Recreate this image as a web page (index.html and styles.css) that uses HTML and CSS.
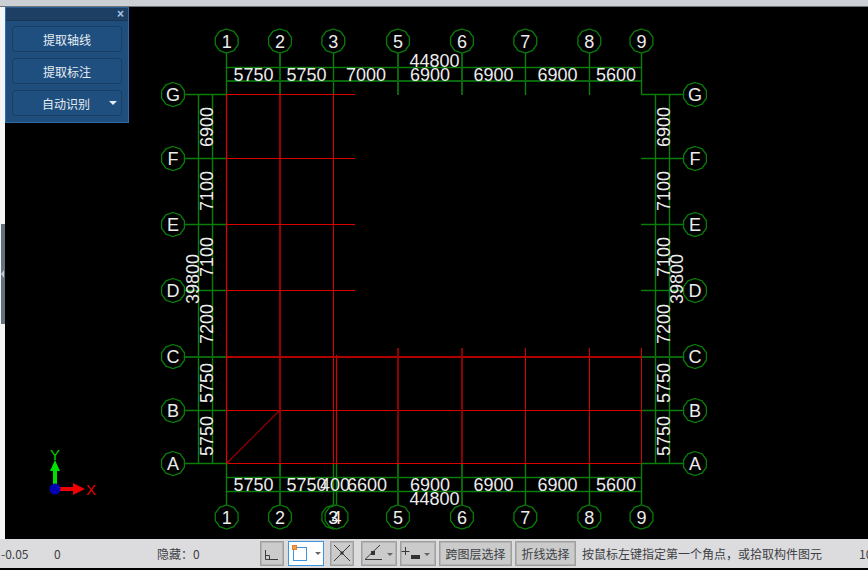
FILE: index.html
```html
<!DOCTYPE html>
<html lang="zh-CN">
<head>
<meta charset="utf-8">
<title>提取轴线</title>
<link rel="stylesheet" href="styles.css">
</head>
<body>
<div class="app">
  <div class="topbar"></div>
  <main class="main">
    <div class="strip"><div class="handle"><span class="handle-arrow"></span></div></div>
    <div class="canvas">
      <svg class="cad" width="863" height="532" viewBox="5 7 863 532">
        <defs>
          <polygon id="bub" points="0,-12 7.05,-9.71 11.41,-3.71 11.41,3.71 7.05,9.71 0,12 -7.05,9.71 -11.41,3.71 -11.41,-3.71 -7.05,-9.71"/>
        </defs>
        <g class="gr">
          <path d="M226.5 53V94M333.5 53V94M525.5 53V95M589.5 53V95M641.5 53V94"/>
          <path d="M226.5 463V505M333.5 463V505M336.5 463V505M525.5 463V505M589.5 463V505M641.5 463V505"/>
          <path d="M185 94.5H227M185 158.5H227M185 224.5H227M185 290.5H227M185 410.5H227M185 463.5H227"/>
          <path d="M641 94.5H683M641 158.5H683M641 224.5H683M641 290.5H683M641 410.5H683M641 463.5H683"/>
          <path d="M227 67.5H641M227 477.5H641M227 491.5H641"/>
          <path d="M198.5 94V463M212.5 94V463M655.5 94V463M669.5 94V463"/>
        </g>
        <g class="gr-thick">
          <path d="M280 53V94M398 53V95M462 53V95"/>
          <path d="M280 463V505M398 463V505M462 463V505"/>
          <path d="M185 357H227M641 357H683"/>
          <path d="M227 81H641"/>
        </g>
        <g class="rd">
          <path d="M227 94.5H355M227 158.5H355M227 224.5H355M227 290.5H355"/>
          <path d="M227 410.5H641M227 463.5H641"/>
          <path d="M226.500 94V463M336.5 355V463"/>
        </g>
        <path class="rd-mid" d="M280 94V410"/>
        <path class="rd-thin" d="M333.5 94V463M525.5 348V463M589.5 348V463M641.5 348V463"/>
        <path class="rd-h" d="M227 357H641"/>
        <path class="rd-thick" d="M398 348V463M462 348V463M280 410V463"/>
        <path class="rd-diag" d="M227 463L280 410"/>
        <g class="bubbles">
          <use href="#bub" x="226.7" y="41"/><use href="#bub" x="280" y="41"/><use href="#bub" x="333.3" y="41"/>
          <use href="#bub" x="398" y="41"/><use href="#bub" x="462" y="41"/><use href="#bub" x="525.3" y="41"/>
          <use href="#bub" x="589.3" y="41"/><use href="#bub" x="641.5" y="41"/>
          <use href="#bub" x="226.7" y="517"/><use href="#bub" x="280" y="517"/><use href="#bub" x="333.3" y="517"/>
          <use href="#bub" x="336.5" y="517"/><use href="#bub" x="398" y="517"/><use href="#bub" x="462" y="517"/>
          <use href="#bub" x="525.3" y="517"/><use href="#bub" x="589.3" y="517"/><use href="#bub" x="641.5" y="517"/>
          <use href="#bub" x="173" y="94.5"/><use href="#bub" x="173" y="158.5"/><use href="#bub" x="173" y="224.5"/>
          <use href="#bub" x="173" y="290.5"/><use href="#bub" x="173" y="356.5"/><use href="#bub" x="173" y="410.5"/><use href="#bub" x="173" y="463.5"/>
          <use href="#bub" x="695" y="94.5"/><use href="#bub" x="695" y="158.5"/><use href="#bub" x="695" y="224.5"/>
          <use href="#bub" x="695" y="290.5"/><use href="#bub" x="695" y="356.5"/><use href="#bub" x="695" y="410.5"/><use href="#bub" x="695" y="463.5"/>
        </g>
        <g class="lbl">
          <text x="226.7" y="47.5">1</text><text x="280" y="47.5">2</text><text x="333.3" y="47.5">3</text>
          <text x="398" y="47.5">5</text><text x="462" y="47.5">6</text><text x="525.3" y="47.5">7</text>
          <text x="589.3" y="47.5">8</text><text x="641.5" y="47.5">9</text>
          <text x="226.7" y="523.5">1</text><text x="280" y="523.5">2</text><text x="333.3" y="523.5">3</text>
          <text x="336.5" y="523.5">4</text><text x="398" y="523.5">5</text><text x="462" y="523.5">6</text>
          <text x="525.3" y="523.5">7</text><text x="589.3" y="523.5">8</text><text x="641.5" y="523.5">9</text>
          <text x="173" y="101">G</text><text x="173" y="165">F</text><text x="173" y="231">E</text>
          <text x="173" y="297">D</text><text x="173" y="363">C</text><text x="173" y="417">B</text><text x="173" y="470">A</text>
          <text x="695" y="101">G</text><text x="695" y="165">F</text><text x="695" y="231">E</text>
          <text x="695" y="297">D</text><text x="695" y="363">C</text><text x="695" y="417">B</text><text x="695" y="470">A</text>
          <text x="253.5" y="81">5750</text><text x="306.5" y="81">5750</text><text x="366" y="81">7000</text>
          <text x="430" y="81">6900</text><text x="493.5" y="81">6900</text><text x="557.5" y="81">6900</text><text x="616" y="81">5600</text>
          <text x="434.5" y="67">44800</text>
          <text x="253.5" y="491">5750</text><text x="306.5" y="491">5750</text><text x="335" y="491">400</text><text x="367" y="491">6600</text>
          <text x="430" y="491">6900</text><text x="493.5" y="491">6900</text><text x="557.5" y="491">6900</text><text x="616" y="491">5600</text>
          <text x="434.5" y="505">44800</text>
          <text transform="translate(212.5 127) rotate(-90)">6900</text><text transform="translate(212.5 191) rotate(-90)">7100</text>
          <text transform="translate(212.5 257) rotate(-90)">7100</text><text transform="translate(212.5 324) rotate(-90)">7200</text>
          <text transform="translate(212.5 383) rotate(-90)">5750</text><text transform="translate(212.5 436) rotate(-90)">5750</text>
          <text transform="translate(199 279) rotate(-90)">39800</text>
          <text transform="translate(669.5 127) rotate(-90)">6900</text><text transform="translate(669.5 191) rotate(-90)">7100</text>
          <text transform="translate(669.5 257) rotate(-90)">7100</text><text transform="translate(669.5 324) rotate(-90)">7200</text>
          <text transform="translate(669.5 383) rotate(-90)">5750</text><text transform="translate(669.5 436) rotate(-90)">5750</text>
          <text transform="translate(683 279) rotate(-90)">39800</text>
        </g>
        <path class="ucs-y" d="M53 489V471H50L55 460L60 471H57V489Z"/>
        <path class="ucs-x" d="M55 487H73V483L85 489L73 495V491H55Z"/>
        <circle class="ucs-o" cx="55" cy="489" r="5.5"/>
        <text class="ucs-ty" x="55" y="460">Y</text>
        <text class="ucs-tx" x="91" y="495">X</text>
      </svg>
      <aside class="panel">
        <header class="panel-head"><span class="panel-close">×</span></header>
        <div class="panel-body">
          <button class="pbtn">提取轴线</button>
          <button class="pbtn">提取标注</button>
          <button class="pbtn pbtn-drop">自动识别<span class="pbtn-arrow"></span></button>
        </div>
      </aside>
    </div>
  </main>
  <footer class="status">
    <span class="s-x">-0.05</span>
    <span class="s-y">0</span>
    <span class="s-hide">隐藏：0</span>
    <button class="tool t-s">
      <svg width="24" height="25" viewBox="260 542 24 25"><path class="ic" d="M265.5 551V560.5H278M265.5 556.5H269.5V560.5"/></svg>
    </button>
    <button class="tool t-m t-on">
      <svg width="36" height="25" viewBox="288 542 36 25">
        <rect x="293.5" y="548.5" width="13" height="13" class="ic-blue"/>
        <rect x="292.5" y="546.5" width="4" height="4" class="ic-orange"/>
        <path class="ic-arrow" d="M315 553H321L318 556Z"/>
      </svg>
    </button>
    <button class="tool t-s t-gap">
      <svg width="24" height="25" viewBox="330 542 24 25"><path class="ic" d="M334 546L350 562M350 546L334 562"/><rect x="340.5" y="552.5" width="3" height="3" class="ic-fill"/></svg>
    </button>
    <button class="tool t-m t-gap2">
      <svg width="36" height="25" viewBox="361 542 36 25">
        <path class="ic" d="M365 560.5H382M365 560.5L380 546"/><rect x="371" y="552" width="4" height="4" class="ic-fill"/>
        <path class="ic-arrow" d="M387 554H393L390 557Z"/>
      </svg>
    </button>
    <button class="tool t-m t-near">
      <svg width="36" height="25" viewBox="400 542 36 25">
        <path class="ic" d="M405.5 548V556M401.5 552.5H409.5"/><rect x="411" y="556" width="9" height="4" class="ic-fill"/>
        <path class="ic-arrow" d="M424 554H430L427 557Z"/>
      </svg>
    </button>
    <button class="tool t-text t-near t-w1">跨图层选择</button>
    <button class="tool t-text t-near t-w2">折线选择</button>
    <span class="s-tip">按鼠标左键指定第一个角点，或拾取构件图元</span>
    <span class="s-end">10</span>
  </footer>
</div>
</body>
</html>
```
FILE: styles.css
```css
* { box-sizing: border-box; }
html, body { margin: 0; padding: 0; background: #000; }
body { width: 868px; height: 570px; overflow: hidden; font-family: "Noto Sans CJK SC", "Liberation Sans", sans-serif; }
.app { display: flex; flex-direction: column; width: 868px; height: 570px; }
.topbar { height: 7px; flex: none; background: #ccd0d4; border-bottom: 1px solid #6f7478; }
.main { display: flex; height: 532px; flex: none; }
.strip { width: 5px; flex: none; background: #f4f5f6; display: flex; align-items: center; padding-left: 1px; }
.handle { width: 4px; height: 100px; background: #65717c; display: flex; align-items: center; margin-top: 1px; }
.handle-arrow { width: 0; height: 0; border: 4px solid transparent; border-left-width: 0; border-right: 3px solid #c5cad0; }
.canvas { position: relative; flex: 1; background: #000; overflow: hidden; }
.cad { display: block; }

.gr path, .gr-thick path, .rd path, .rd-mid, .rd-thin, .rd-h, .rd-thick, .rd-diag { fill: none; }
.gr path { stroke: #0a7d0a; stroke-width: 1.4; }
.gr-thick path { stroke: #0a660a; stroke-width: 2; }
.rd path { stroke: #dc0000; stroke-width: 1.2; }
.rd-mid { stroke: #d00000; stroke-width: 1.5; }
.rd-thin { stroke: #d80000; stroke-width: 1; }
.rd-h { stroke: #b00000; stroke-width: 2; }
.rd-thick { stroke: #8c0000; stroke-width: 2; }
.rd-diag { stroke: #a00000; stroke-width: 1.2; }
.bubbles use { fill: #000; stroke: #0a7a0a; stroke-width: 1.3; }
.lbl text { font-family: "Liberation Sans", sans-serif; font-size: 18px; fill: #ececec; text-anchor: middle; }
.ucs-y { fill: #00e000; }
.ucs-x { fill: #f00000; }
.ucs-o { fill: #0000b4; }
.ucs-ty, .ucs-tx { font-family: "Liberation Sans", sans-serif; font-size: 15px; text-anchor: middle; }
.ucs-ty { fill: #00d000; }
.ucs-tx { fill: #e00000; }

.panel { position: absolute; left: 0; top: 0; width: 124px; height: 116px; background: #1f4e7c; border: 1px solid #2f6cab; border-top-color: #2a5f95; }
.panel-head { height: 13px; background: #1c3f63; border-bottom: 1px solid #173652; display: flex; justify-content: flex-end; align-items: center; padding-right: 4px; }
.panel-close { color: #a7c6e4; font: bold 12px/12px "Liberation Sans", sans-serif; }
.panel-body { display: flex; flex-direction: column; gap: 6px; padding: 5px 6px 0 6px; }
.pbtn { position: relative; height: 26px; width: 110px; padding: 1px 0 0; background: #1f4f7e; border: 1px solid #1a3e62; border-radius: 3px; color: #e6edf4; font: 12px/16px "Noto Sans CJK SC", sans-serif; text-align: center; }
.pbtn-drop { padding-right: 2px; }
.pbtn-arrow { position: absolute; right: 4px; top: 10px; width: 0; height: 0; border: 4px solid transparent; border-top: 4px solid #e8eef4; border-bottom: 0; }

.status { display: flex; align-items: center; flex: none; height: 29px; background: #dcdcde; color: #3c4044; font-size: 12px; line-height: 16px; padding-left: 1px; }
.status > * { flex: none; }
.s-x { width: 53px; white-space: nowrap; }
.s-y { width: 103px; }
.s-hide { width: 103px; white-space: nowrap; }
.tool { height: 25px; padding: 0; margin: 0; background: #cbcbcb; border: 1px solid #9f9f9f; box-shadow: inset 0 0 0 1px #b4b4b4; display: block; color: #3c4044; font: 12px/16px "Noto Sans CJK SC", sans-serif; }
.tool svg { display: block; margin: -1px; }
.t-s { width: 24px; }
.t-m { width: 36px; }
.t-on { background: #fff; border-color: #3c94e4; box-shadow: none; margin-left: 4px; }
.t-gap { margin-left: 6px; }
.t-gap2 { margin-left: 7px; }
.t-near { margin-left: 3px; }
.t-w1 { width: 73px; }
.t-w2 { width: 61px; }
.s-tip { margin-left: 6px; width: 277px; white-space: nowrap; }
.s-end { white-space: nowrap; }
.ic { fill: none; stroke: #3a3a3a; stroke-width: 1; }
.ic-fill { fill: #333; }
.ic-blue { fill: #fff; stroke: #3c94e4; stroke-width: 1; }
.ic-orange { fill: #f59a46; stroke: #e08030; stroke-width: 1; }
.ic-arrow { fill: #666; }
```
